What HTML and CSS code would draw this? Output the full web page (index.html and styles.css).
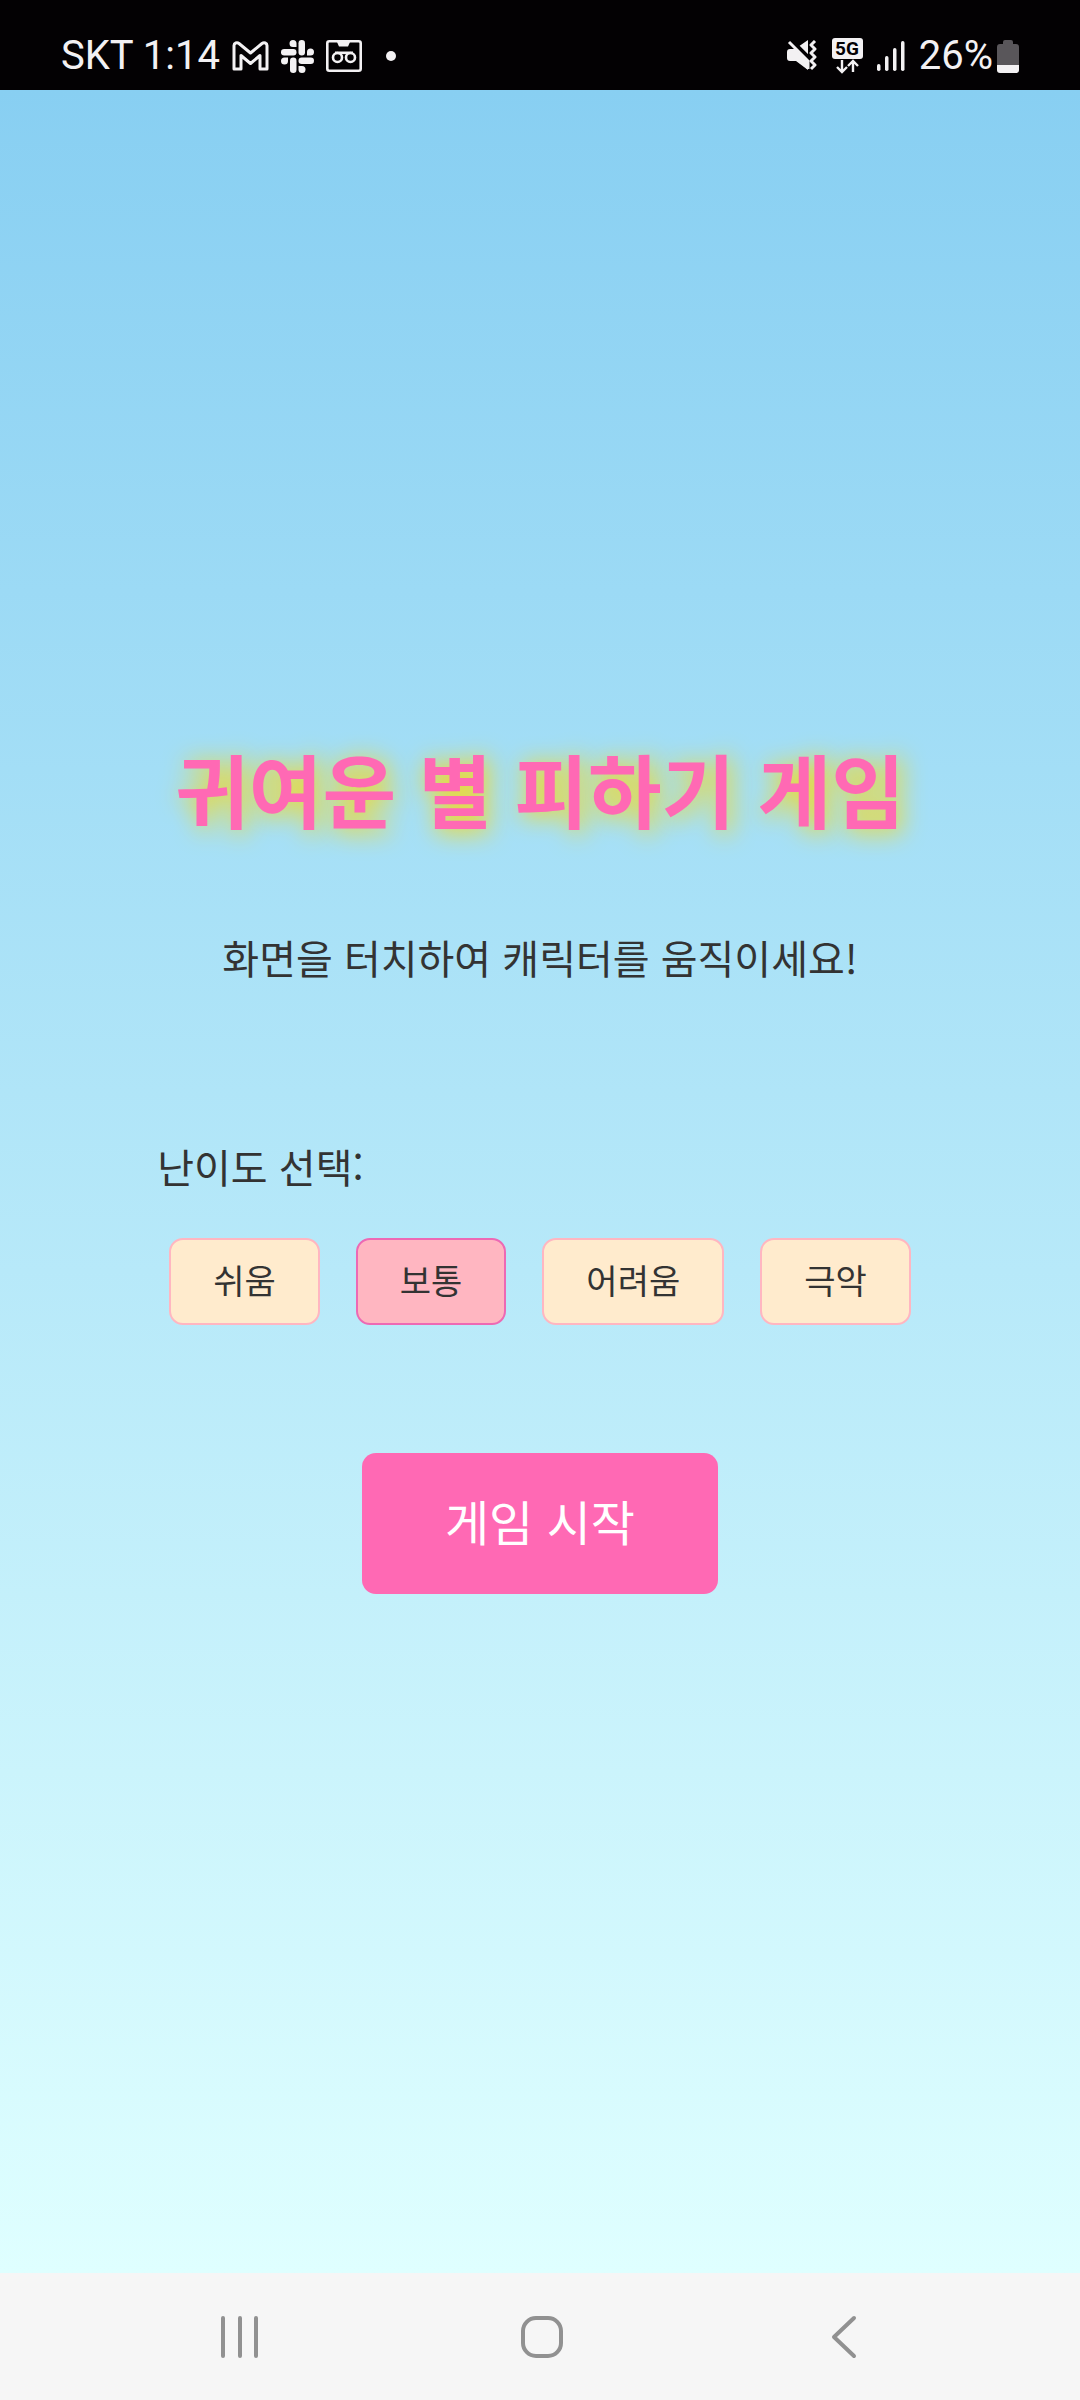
FILE: index.html
```
<!DOCTYPE html>
<html lang="ko">
<head>
  <meta charset="UTF-8">
  <meta name="viewport" content="width=device-width, initial-scale=1.0">
  <title>귀여운 별 피하기 게임</title>
  <link rel="stylesheet" href="styles.css">
</head>
<body>
  <!-- Status bar -->
  <header class="status-bar">
    <div class="status-left">
      <span class="status-text">SKT 1:14</span>
      <svg class="icon-mail" width="37" height="30" viewBox="0 0 37 30" fill="none" stroke="#f3f1f3" stroke-width="3" stroke-linejoin="round">
        <path d="M2 28V4.5C2 2 5 1 7 2.5L18.5 12 30 2.5C32 1 35 2 35 4.5V28H28V14.5L18.5 22.5 9 14.5V28Z"/>
      </svg>
      <svg class="icon-slack" width="33" height="33" viewBox="0 0 33 33" fill="#f3f1f3">
        <path d="M15.5 7H12A3.5 3.5 0 1 1 15.5 3.5Z"/>
        <rect x="0" y="9" width="15.5" height="6.5" rx="3.2"/>
        <rect x="17.5" y="0" width="6.5" height="15.5" rx="3.2"/>
        <path d="M26 15.5V12A3.5 3.5 0 1 1 29.5 15.5Z"/>
        <rect x="17.5" y="17.5" width="15.5" height="6.5" rx="3.2"/>
        <path d="M17.5 26H21A3.5 3.5 0 1 1 17.5 29.5Z"/>
        <rect x="9" y="17.5" width="6.5" height="15.5" rx="3.2"/>
        <path d="M7 17.5V21A3.5 3.5 0 1 1 3.5 17.5Z"/>
      </svg>
      <svg class="icon-voicemail" width="36" height="32" viewBox="0 0 36 32" fill="none" stroke="#f3f1f3" stroke-width="2.6">
        <rect x="1.3" y="1.3" width="33.4" height="29.4" rx="2"/>
        <path d="M11 2H24L22 6.5H13Z" fill="#f3f1f3" stroke="none"/>
        <circle cx="11.5" cy="17.5" r="4.5"/>
        <circle cx="24.5" cy="17.5" r="4.5"/>
        <path d="M9 12.8H27"/>
      </svg>
      <span class="status-dot"></span>
    </div>
    <div class="status-right">
      <svg class="icon-mute" width="31" height="32" viewBox="0 0 31 32">
        <path d="M0 12Q0 9 3 9H8L21 0V30L9 21H3Q0 21 0 18Z" fill="#f3f1f3"/>
        <path d="M3 -1L24 20" stroke="#030103" stroke-width="4"/>
        <path d="M2 2L21 21V29" stroke="#f3f1f3" stroke-width="3" fill="none"/>
        <path d="M28 1L24 5L28 9L24 13L28 17L24 21L28 25L24 29" stroke="#f3f1f3" stroke-width="3" fill="none" stroke-linejoin="round"/>
      </svg>
      <svg class="icon-5g" width="31" height="36" viewBox="0 0 31 36">
        <rect x="0" y="0" width="31" height="21" rx="3" fill="#f3f1f3"/>
        <text x="15" y="17" text-anchor="middle" font-size="19" font-weight="700" fill="#030103">5G</text>
        <path d="M10 22V34M5 29L10 34L15 29M21 34V23M16 28L21 23L26 28" fill="none" stroke="#f3f1f3" stroke-width="2.4"/>
      </svg>
      <svg class="icon-signal" width="28" height="30" viewBox="0 0 28 30" fill="#f3f1f3">
        <rect x="0" y="23" width="3.5" height="7" rx="1.7"/>
        <rect x="8" y="15" width="3.5" height="15" rx="1.7"/>
        <rect x="16" y="7" width="3.5" height="23" rx="1.7"/>
        <rect x="24" y="0" width="3.5" height="30" rx="1.7"/>
      </svg>
      <span class="status-text">26%</span>
      <svg class="icon-battery" width="22" height="33" viewBox="0 0 22 33">
        <path d="M6 2Q6 0 8 0H14Q16 0 16 2V4H19Q22 4 22 7V25H0V7Q0 4 3 4H6Z" fill="#59565a"/>
        <path d="M0 25H22V30Q22 33 19 33H3Q0 33 0 30Z" fill="#f3f1f3"/>
      </svg>
    </div>
  </header>

  <!-- Start screen -->
  <main class="start-screen">
    <h1 class="title">귀여운 별 피하기 게임</h1>
    <p class="guide">화면을 터치하여 캐릭터를 움직이세요!</p>

    <div class="difficulty" role="group" aria-labelledby="difficulty-label">
      <p class="difficulty-label" id="difficulty-label">난이도 선택:</p>
      <div class="difficulty-options">
        <button type="button" class="difficulty-btn">쉬움</button>
        <button type="button" class="difficulty-btn selected">보통</button>
        <button type="button" class="difficulty-btn">어려움</button>
        <button type="button" class="difficulty-btn">극악</button>
      </div>
    </div>

    <button type="button" class="start-btn">게임 시작</button>
  </main>

  <!-- Navigation bar -->
  <nav class="nav-bar">
    <button type="button" class="nav-btn" aria-label="최근 앱">
      <svg width="44" height="44" viewBox="0 0 44 44">
        <path d="M5 3V41M22 3V41M38 3V41"/>
      </svg>
    </button>
    <button type="button" class="nav-btn" aria-label="홈">
      <svg width="44" height="44" viewBox="0 0 44 44">
        <rect x="3" y="3" width="38" height="38" rx="13"/>
      </svg>
    </button>
    <button type="button" class="nav-btn" aria-label="뒤로">
      <svg width="44" height="44" viewBox="0 0 44 44">
        <path d="M33 3L13 22L33 41"/>
      </svg>
    </button>
  </nav>

  <script>
    const buttons = document.querySelectorAll('.difficulty-btn');

    // Select difficulty
    buttons.forEach(button => {
      button.addEventListener('click', () => {
        buttons.forEach(b => b.classList.remove('selected'));
        button.classList.add('selected');
      });
    });
  </script>
</body>
</html>
```
FILE: styles.css
```
/* General Reset */
* {
  box-sizing: border-box;
}

body {
  font-family: "Noto Sans CJK KR", sans-serif;
  margin: 0;
  min-height: 100vh;
  display: flex;
  flex-direction: column;
  color: #333;
  background-color: #f6f6f6;
}

button {
  font-family: inherit;
  cursor: pointer;
}

/* Status Bar */
.status-bar {
  height: 90px;
  padding: 22px 61px 0;
  display: flex;
  justify-content: space-between;
  align-items: center;
  background-color: #030103;
  color: #f3f1f3;
  font-family: Roboto, sans-serif;
}

.status-left,
.status-right {
  display: flex;
  align-items: center;
}

.status-left {
  gap: 12px;
}

.status-right {
  gap: 14px;
}

.status-text {
  font-size: 40px;
  line-height: 48px;
}

.status-right .status-text {
  margin-right: -10px;
}

.status-dot {
  width: 10px;
  height: 10px;
  margin-left: 12px;
  border-radius: 50%;
  background-color: #f3f1f3;
}

/* Start Screen */
.start-screen {
  flex: 1;
  display: flex;
  flex-direction: column;
  justify-content: center;
  align-items: center;
  background: linear-gradient(to bottom, #88cff2, #dfffff);
}

.title {
  margin: 0 0 97px;
  font-size: 80px;
  line-height: 92px;
  color: #ff69b4;
  text-shadow: 3px 3px 24px #ffd700;
}

.guide {
  margin: 0 0 155px;
  font-size: 40px;
  line-height: 54px;
}

/* Difficulty */
.difficulty-label {
  margin: 0 0 45px;
  font-size: 40px;
  line-height: 54px;
}

.difficulty-options {
  display: flex;
  gap: 36px;
  padding: 0 12px;
}

.difficulty-btn {
  padding: 17px 42px 21px;
  font-size: 34px;
  line-height: 45px;
  color: #333;
  background-color: #ffebcd;
  border: 2px solid #ffb6c1;
  border-radius: 14px;
}

.difficulty-btn.selected {
  background-color: #ffb6c1;
  border-color: #ed69b4;
}

/* Start Button */
.start-btn {
  margin: 128px 0 28px;
  padding: 32px 83px 39px;
  font-size: 48px;
  line-height: 70px;
  color: #fff;
  background-color: #ff69b4;
  border: none;
  border-radius: 14px;
}

/* Navigation Bar */
.nav-bar {
  height: 127px;
  padding: 0 86px 0 89px;
  display: flex;
  background-color: #f6f6f6;
}

.nav-btn {
  flex: 1;
  display: flex;
  justify-content: center;
  align-items: center;
  padding: 0;
  background: none;
  border: none;
}

.nav-btn svg {
  fill: none;
  stroke: #919191;
  stroke-width: 4;
  stroke-linecap: round;
  stroke-linejoin: round;
}
```
